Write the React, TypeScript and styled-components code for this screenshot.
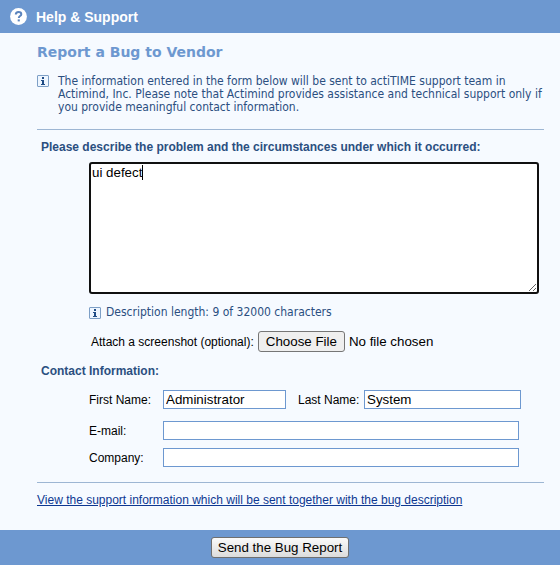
import React, { useEffect, useRef, useState } from "react";
import styled, { createGlobalStyle } from "styled-components";

const sans = `"Liberation Sans", Arial, sans-serif`;
const wide = `"DejaVu Sans", Verdana, sans-serif`;
const note = `"DejaVu Sans Condensed", Tahoma, sans-serif`;

const GlobalStyle = createGlobalStyle`
  *, *::before, *::after { box-sizing: border-box; }
  body {
    margin: 0;
    background: #f6faff;
    font: 12px/16px ${sans};
    color: #000;
  }
`;

const Page = styled.form`
  display: flex;
  flex-direction: column;
  min-height: 100vh;
`;

const Header = styled.header`
  display: flex;
  align-items: center;
  gap: 9px;
  height: 33px;
  padding-left: 10px;
  background: #6d98d0;
  color: #fff;
`;

const HeaderTitle = styled.div`
  font: bold 14px/20px ${sans};
`;

const Content = styled.main`
  flex: 1;
  display: flex;
  flex-direction: column;
  padding: 9px 16px 22px 37px;
`;

const Title = styled.h1`
  margin: 0 0 13px;
  font: bold 14px/20px ${wide};
  color: #6d98d0;
`;

const Notice = styled.div`
  display: flex;
  gap: 9px;
  margin: 0 -8px 15px 0;
  font: 12px/13px ${note};
  color: #2b4f7f;
`;

const NoticeText = styled.p`
  margin: 0;
`;

const Rule = styled.hr<{ $spaced?: boolean }>`
  width: 100%;
  height: 1px;
  margin: ${(p) => (p.$spaced ? "15px" : "0")} 0 0;
  border: 0;
  background: #9db6d3;
`;

const SectionLabel = styled.label`
  padding: 9px 4px 7px;
  font-weight: bold;
  color: #2b4f7f;
`;

const SectionHeading = styled.h2`
  margin: 0;
  padding: 11px 4px;
  font: bold 12px/16px ${sans};
  color: #2b4f7f;
`;

const Indented = styled.div`
  display: flex;
  flex-direction: column;
  padding-left: 52px;
`;

const DescriptionBox = styled.div`
  position: relative;
  display: flex;
  margin-right: 5px;
`;

const Description = styled.textarea<{ $drawnCaret: boolean }>`
  flex: 1;
  height: 132px;
  padding: 1px;
  border: 2px solid #101010;
  border-radius: 3px;
  outline: 0;
  background: #fff;
  font-family: ${sans};
  line-height: 16px;
  color: #000;
  caret-color: ${(p) => (p.$drawnCaret ? "transparent" : "auto")};
  resize: both;
`;

const Caret = styled.span`
  position: absolute;
  top: 3px;
  left: 53px;
  width: 1px;
  height: 15px;
  background: #000;
  pointer-events: none;
`;

const Counter = styled.div`
  display: flex;
  align-items: center;
  gap: 5px;
  padding: 12px 0;
  font: 12px/13px ${note};
  color: #2b4f7f;
`;

const FileRow = styled.div`
  display: flex;
  align-items: center;
  gap: 4px;
  padding-left: 2px;
`;

const FileInput = styled.input`
  flex: 1;
  min-width: 0;
  font-family: ${sans};

  &::file-selector-button {
    height: 21px;
    margin: 0 4px 0 0;
    padding: 0 7px;
    border: 1px solid #767676;
    border-radius: 3px;
    background: #efefef;
    color: #000;
    font-family: ${sans};
  }
`;

const Fields = styled.div`
  display: flex;
  flex-direction: column;
  gap: 8px;
`;

const Field = styled.div<{ $wide?: boolean }>`
  display: grid;
  grid-template-columns: ${(p) => (p.$wide ? "74px 123fr 78px 157fr" : "74px 1fr")};
  align-items: center;
  margin: ${(p) => (p.$wide ? "0 23px 4px 0" : "0 25px 0 0")};
`;

const SecondLabel = styled.label`
  padding-left: 12px;
  white-space: nowrap;
`;

const TextField = styled.input`
  width: 100%;
  min-width: 0;
  height: 19px;
  margin: 0;
  padding: 0 2px;
  border: 1px solid #6d98d0;
  border-radius: 0;
  background: #fff;
  font-family: ${sans};
  color: #000;
`;

const SupportLink = styled.a`
  align-self: flex-start;
  margin-top: 9px;
  color: #0d3791;
  text-decoration: underline;
`;

const Footer = styled.footer`
  display: flex;
  justify-content: center;
  align-items: center;
  height: 35px;
  background: #6d98d0;
`;

const SendButton = styled.button`
  height: 21px;
  padding: 0 6px;
  border: 1px solid #6f6f6f;
  border-radius: 3px;
  background: linear-gradient(#fafafa, #dcdcdc);
  font-family: ${sans};
  color: #000;
`;

const Icon = styled.svg`
  flex: none;
  display: block;
`;

const HelpIcon = () => (
  <Icon width="17" height="17" viewBox="0 0 17 17" aria-hidden="true">
    <circle cx="8.5" cy="8.5" r="8.4" fill="#fff" />
    <path d="M5.8 6.5C5.8 4.6 7 4 8.5 4s2.8.8 2.8 2.2c0 1.9-2.5 1.8-2.5 3.8" fill="none" stroke="#5b84bd" strokeWidth="2" />
    <rect x="7.7" y="11.4" width="2.1" height="2" fill="#5b84bd" />
  </Icon>
);

const InfoIcon = () => (
  <Icon width="12" height="12" viewBox="0 0 12 12" aria-hidden="true">
    <rect x="0.5" y="0.5" width="11" height="11" rx="0.5" fill="#eef6ff" stroke="#7d9fc6" />
    <path d="M5 2h2v2H5zM4 5h3v4h1v1H4V9h1V6H4z" fill="#1f4c86" />
  </Icon>
);

const initialText = "ui defect";

export default function App() {
  const [text, setText] = useState(initialText);
  const [pristine, setPristine] = useState(true);
  const area = useRef<HTMLTextAreaElement>(null);

  useEffect(() => {
    const el = area.current;
    if (el) {
      el.focus();
      el.setSelectionRange(el.value.length, el.value.length);
    }
  }, []);

  return (
    <Page onSubmit={(e) => e.preventDefault()}>
      <GlobalStyle />
      <Header>
        <HelpIcon />
        <HeaderTitle>Help &amp; Support</HeaderTitle>
      </Header>
      <Content>
        <Title>Report a Bug to Vendor</Title>
        <Notice>
          <InfoIcon />
          <NoticeText>
            The information entered in the form below will be sent to actiTIME support team in
            Actimind, Inc. Please note that Actimind provides assistance and technical support only if
            you provide meaningful contact information.
          </NoticeText>
        </Notice>
        <Rule />
        <SectionLabel htmlFor="description">
          Please describe the problem and the circumstances under which it occurred:
        </SectionLabel>
        <Indented>
          <DescriptionBox>
            <Description
              id="description"
              ref={area}
              value={text}
              spellCheck={false}
              maxLength={32000}
              $drawnCaret={pristine}
              onChange={(e) => setText(e.target.value)}
              onKeyDown={() => setPristine(false)}
              onPointerDown={() => setPristine(false)}
              onBlur={() => setPristine(false)}
            />
            {pristine && <Caret />}
          </DescriptionBox>
          <Counter>
            <InfoIcon />
            <span>Description length: {text.length} of 32000 characters</span>
          </Counter>
          <FileRow>
            <label htmlFor="screenshot">Attach a screenshot (optional):</label>
            <FileInput id="screenshot" type="file" />
          </FileRow>
        </Indented>
        <SectionHeading>Contact Information:</SectionHeading>
        <Indented>
          <Fields>
            <Field $wide>
              <label htmlFor="first">First Name:</label>
              <TextField id="first" defaultValue="Administrator" />
              <SecondLabel htmlFor="last">Last Name:</SecondLabel>
              <TextField id="last" defaultValue="System" />
            </Field>
            <Field>
              <label htmlFor="email">E-mail:</label>
              <TextField id="email" type="email" />
            </Field>
            <Field>
              <label htmlFor="company">Company:</label>
              <TextField id="company" />
            </Field>
          </Fields>
        </Indented>
        <Rule $spaced />
        <SupportLink href="#support">
          View the support information which will be sent together with the bug description
        </SupportLink>
      </Content>
      <Footer>
        <SendButton type="submit">Send the Bug Report</SendButton>
      </Footer>
    </Page>
  );
}
